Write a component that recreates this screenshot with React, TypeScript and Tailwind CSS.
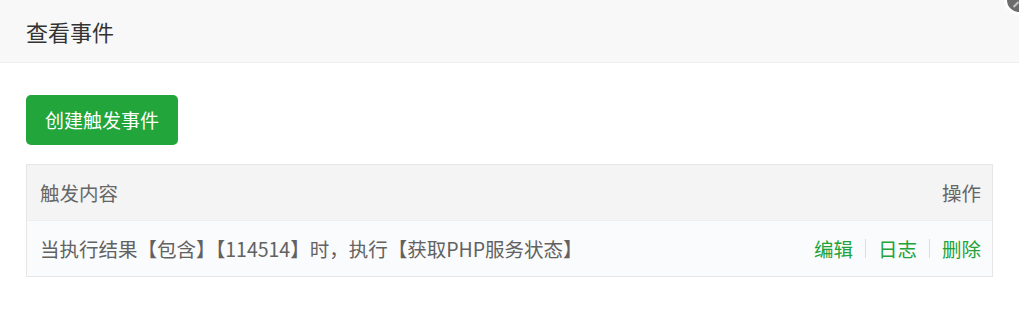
import React from 'react'

const font = { fontFamily: '"Noto Sans CJK SC", "Noto Sans", sans-serif' }

interface EventRow {
  id: number
  content: string
}

const rows: EventRow[] = [
  { id: 1, content: '当执行结果【包含】【114514】时，执行【获取PHP服务状态】' },
]

export default function App() {
  return (
    <div className="relative h-[319px] w-full overflow-hidden bg-white" style={font}>
      {/* 标题栏 */}
      <div className="flex h-[63px] items-center border-b border-[#eeeeee] bg-[#f8f8f8] pl-[26px] text-[22px] text-[#333]">
        查看事件
      </div>
      <span className="absolute right-[-15px] top-[-15px] flex h-[30px] w-[30px] items-center justify-center rounded-full border-[3px] border-white bg-[#6b6b6b]">
        <span className="mt-[8px] mr-[6px] block h-[7px] w-[2px] rotate-45 bg-white/60" />
      </span>

      <div className="px-[26px] pt-[32px]">
        <button className="flex h-[50px] w-[152px] items-center justify-center rounded-[5px] bg-[#22a53b] text-[19px] text-white">
          创建触发事件
        </button>

        <div className="mt-[19px] border border-[#e6e6e6] text-[19.5px]">
          <div className="flex h-[56px] items-center justify-between border-b border-[#eceef2] bg-[#f4f4f4] pl-[13px] pr-[11px] text-[#666]">
            <span>触发内容</span>
            <span>操作</span>
          </div>
          {rows.map((row) => (
            <div
              key={row.id}
              className="flex h-[55px] items-center justify-between bg-[#fafbfc] pl-[13px] pr-[11px] text-[#626262]"
            >
              <span>{row.content}</span>
              <div className="flex items-center text-[#22a33a]">
                <a className="cursor-pointer">编辑</a>
                <span className="mx-[12px] h-[19px] w-px bg-[#dddddd]" />
                <a className="cursor-pointer">日志</a>
                <span className="mx-[12px] h-[19px] w-px bg-[#dddddd]" />
                <a className="cursor-pointer">删除</a>
              </div>
            </div>
          ))}
        </div>
      </div>
    </div>
  )
}
